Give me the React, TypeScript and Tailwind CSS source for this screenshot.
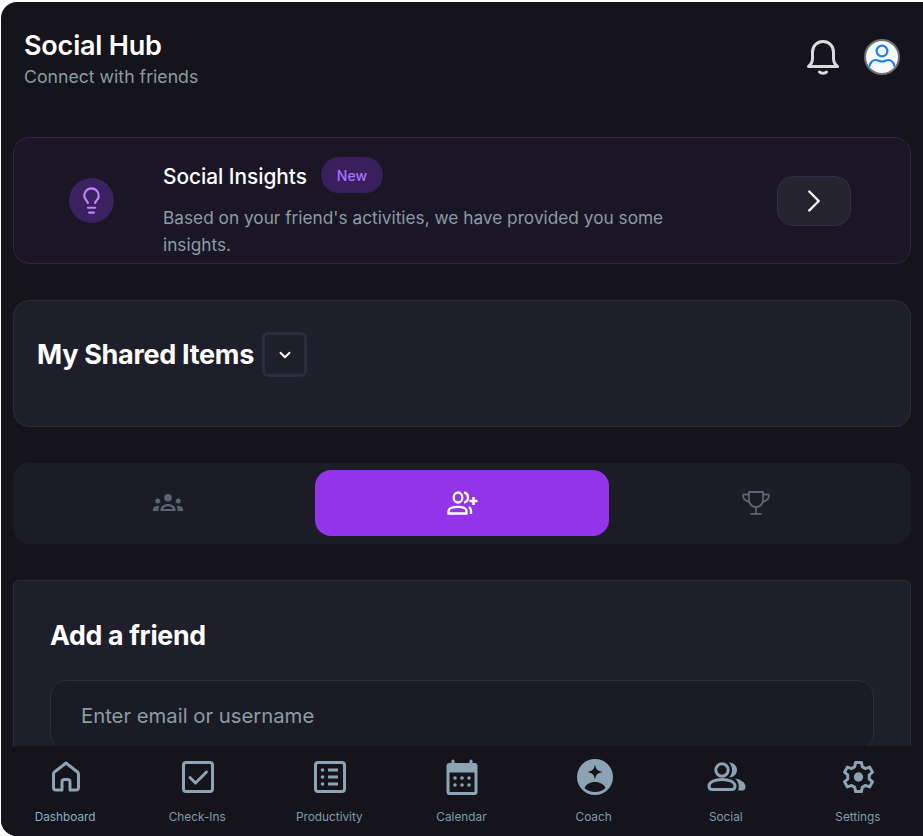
import { ChevronDown, ChevronRight, Lightbulb } from "lucide-react";

const font = { fontFamily: "Inter, 'Liberation Sans', sans-serif" };

const HomeIcon = () => (
  <svg width="28" height="31" viewBox="0 0 28 31" fill="none" stroke="currentColor" strokeWidth="3" strokeLinejoin="round">
    <path d="M10 29H4a2.5 2.5 0 0 1-2.5-2.5V13a2.5 2.5 0 0 1 1-2L14 2l11.500 9a2.500 2.500 0 0 1 1 2v13.500A2.500 2.500 0 0 1 24 29h-6v-8a2.500 2.500 0 0 0-2.500-2.500h-3A2.500 2.500 0 0 0 10 21z" />
  </svg>
);

const CheckIcon = () => (
  <svg width="32" height="32" viewBox="0 0 32 32" fill="none" stroke="currentColor" strokeWidth="3">
    <rect x="1.500" y="1.500" width="29" height="29" rx="2.500" />
    <path d="M8 16.500l5.500 5.500L24.500 11" strokeLinecap="round" strokeLinejoin="round" />
  </svg>
);

const ListIcon = () => (
  <svg width="32" height="32" viewBox="0 0 32 32" fill="none" stroke="currentColor" strokeWidth="3">
    <rect x="1.500" y="1.500" width="29" height="29" rx="2.500" />
    <path d="M14 9h10M14 16h10M14 23h10" />
    <circle cx="8.500" cy="9" r="1.800" fill="currentColor" stroke="none" />
    <circle cx="8.500" cy="16" r="1.800" fill="currentColor" stroke="none" />
    <circle cx="8.500" cy="23" r="1.800" fill="currentColor" stroke="none" />
  </svg>
);

const CalendarIcon = () => (
  <svg width="32" height="36" viewBox="0 0 32 36" fill="currentColor">
    <path fillRule="evenodd" d="M7 0.500a1.500 1.500 0 0 1 1.500 1.500v2h15V2a1.500 1.500 0 0 1 3 0v2h2A3 3 0 0 1 31.500 7v26a3 3 0 0 1-3 3h-25a3 3 0 0 1-3-3V7a3 3 0 0 1 3-3h2V2A1.500 1.500 0 0 1 7 0.500zM3.500 13.500V33h25V13.500z" />
    <circle cx="9" cy="19" r="1.800" />
    <circle cx="16" cy="19" r="1.800" />
    <circle cx="23" cy="19" r="1.800" />
    <circle cx="9" cy="26" r="1.800" />
    <circle cx="16" cy="26" r="1.800" />
    <circle cx="23" cy="26" r="1.800" />
  </svg>
);

const CoachIcon = () => (
  <svg width="36" height="36" viewBox="0 0 36 36">
    <circle cx="18" cy="18" r="18" fill="currentColor" />
    <path d="M18 5.500c1 5 2.500 6.500 7.500 7.500-5 1-6.500 2.500-7.500 7.500-1-5-2.500-6.500-7.500-7.500 5-1 6.500-2.500 7.500-7.500z" fill="#14141a" />
    <path d="M7.500 29c1.500-3.500 5.500-6 10.500-6s9 2.500 10.500 6c-2.800 2.800-6.500 4-10.500 4S10.300 31.800 7.500 29z" fill="#14141a" />
  </svg>
);

const SocialIcon = () => (
  <svg width="39" height="29" viewBox="0 0 39 29" fill="none">
    <circle cx="15" cy="8" r="6.200" stroke="currentColor" strokeWidth="3" />
    <path d="M2 24c0-4 5.500-6.500 13-6.500S28 20 28 24c0 2-1 3.500-3 3.500H5c-2 0-3-1.500-3-3.500z" stroke="currentColor" strokeWidth="3" />
    <path d="M22 0.500c4.500 0 8 3.300 8 7.500s-3.500 7.500-8 7.500c2-2 3-4.500 3-7.500s-1-5.500-3-7.500z" fill="currentColor" />
    <path d="M28 16.500c6 1 10.500 4 10.500 8 0 2.500-1 4-3 4H31c.6-1.200.8-2.500.8-4 0-3-1.300-6-3.800-8z" fill="currentColor" />
  </svg>
);

const GearIcon = () => (
  <svg width="35" height="36" viewBox="0 0 24 24" fill="none" stroke="currentColor" strokeWidth="2.050" strokeLinejoin="round">
    <path d="M10 2h4l.6 3a7.500 7.500 0 0 1 2.100 1.200l2.900-1 2 3.500-2.300 2a7.500 7.500 0 0 1 0 2.600l2.300 2-2 3.500-2.900-1a7.500 7.500 0 0 1-2.100 1.200L14 22h-4l-.6-3a7.500 7.500 0 0 1-2.100-1.200l-2.900 1-2-3.500 2.300-2a7.500 7.500 0 0 1 0-2.600l-2.300-2 2-3.500 2.900 1A7.500 7.500 0 0 1 9.400 5z" />
    <circle cx="12" cy="12" r="3.200" fill="currentColor" stroke="none" />
  </svg>
);

const BellIcon = () => (
  <svg width="32" height="35" viewBox="0 0 32 35" fill="none" stroke="#d8dade" strokeWidth="3" strokeLinecap="round" strokeLinejoin="round">
    <path d="M1.500 26.500c2.500-2 4-4 4-8V12c0-6 4.500-10.500 10.500-10.500S26.500 6 26.500 12v6.500c0 4 1.500 6 4 8z" />
    <path d="M12.500 32c1.200 1.500 5.800 1.500 7 0" />
  </svg>
);

const GroupsIcon = () => (
  <svg width="30" height="18" viewBox="0 0 30 18" fill="#5b6472">
    <circle cx="15" cy="3.800" r="3.800" />
    <circle cx="4.700" cy="7" r="2.500" />
    <circle cx="25.300" cy="7" r="2.500" />
    <path d="M0 17v-1.500c0-2 1.800-3.500 4.600-3.500.6 0 1.200.1 1.700.2-.6.900-.9 2-.9 3.200V17zM30 17v-1.500c0-2-1.800-3.500-4.600-3.500-.6 0-1.200.1-1.700.2.600.9.900 2 .9 3.200V17z" />
    <path fillRule="evenodd" d="M7.500 17v-1.500c0-3 3.200-5.500 7.500-5.500s7.500 2.500 7.500 5.500V17zM10 15h10c-.4-1.500-2.500-2.800-5-2.800s-4.600 1.300-5 2.800z" />
  </svg>
);

const PersonAddIcon = () => (
  <svg width="31" height="24" viewBox="0 0 31 24" fill="none" stroke="#fff" strokeWidth="2.300">
    <ellipse cx="11" cy="6.500" rx="4.300" ry="5" />
    <path d="M1.500 22.500v-2c0-3 4-4.700 9.500-4.700s8.500 1.700 8.500 4.700v2z" />
    <path d="M17 1.500c2.500.5 4 2.500 4 5s-1.500 4.500-4 5M22 16c1.300 1 2 2.500 2 4.300v2.700" />
    <path d="M26.500 6v8M22.500 10h8" strokeWidth="2.600" />
  </svg>
);

const TrophyIcon = () => (
  <svg width="28" height="24" viewBox="0 0 28 24" fill="none" stroke="#5b6472" strokeWidth="1.800" strokeLinejoin="round">
    <path d="M7 1h14v8c0 4-3 7-7 7s-7-3-7-7z" />
    <path d="M7 3.500H2c-.6 0-1 .4-1 1 0 3 2 5.500 6.500 6.500M21 3.500h5c.6 0 1 .4 1 1 0 3-2 5.500-6.500 6.500" />
    <path d="M14 16v6M8.500 22.800h11" />
  </svg>
);

const AvatarIcon = () => (
  <div className="flex h-9 w-9 items-center justify-center overflow-hidden rounded-full border-2 border-[#6f7275] bg-[#f6f8fa]">
    <svg width="32" height="32" viewBox="0 0 32 32" fill="none" stroke="#1a7fe8" strokeWidth="2.200">
      <circle cx="16" cy="10" r="5.400" />
      <path d="M3.500 25c1-4 3.500-6 6.500-6 2 0 3.500 1.500 6 1.500s4-1.500 6-1.500c3 0 5.500 2 6.500 6" strokeLinecap="round" />
    </svg>
  </div>
);

const navItems = [
  { label: "Dashboard", icon: <HomeIcon />, active: true },
  { label: "Check-Ins", icon: <CheckIcon /> },
  { label: "Productivity", icon: <ListIcon /> },
  { label: "Calendar", icon: <CalendarIcon /> },
  { label: "Coach", icon: <CoachIcon /> },
  { label: "Social", icon: <SocialIcon /> },
  { label: "Settings", icon: <GearIcon /> },
];

export default function App() {
  return (
    <div className="h-[836px] w-[923px] overflow-hidden bg-white pl-px pt-[2px]" style={font}>
      <div className="flex h-[834px] flex-col overflow-hidden rounded-l-2xl rounded-tr-none bg-[#14141a]">
        <main className="min-h-0 flex-1 overflow-hidden px-3">
          {/* Header */}
          <header className="flex h-[135px] items-start justify-between pl-[11px] pr-[11px] pt-[26px]">
            <div>
              <h1 className="text-[27px] leading-[36px] font-semibold tracking-[-0.2px] text-white">Social Hub</h1>
              <p className="mt-px text-[17.700px] leading-[24px] text-[#8c9ca4]">Connect with friends</p>
            </div>
            <div className="flex items-center gap-[25px] pt-[11px]">
              <BellIcon />
              <AvatarIcon />
            </div>
          </header>

          {/* Insights */}
          <section className="flex h-[127px] items-center rounded-2xl border border-[#30244a] bg-[#1b1625] pl-[55px] pr-[59px]">
            <div className="flex h-[45px] w-[45px] shrink-0 items-center justify-center rounded-full bg-[#3b2160]">
              <Lightbulb className="h-[29px] w-[29px] text-[#c084fc]" strokeWidth={1.800} />
            </div>
            <div className="ml-[49px] flex-1 pt-[14px]">
              <div className="flex h-9 items-center gap-[14px]">
                <h2 className="mt-[3px] text-[20.800px] leading-[36px] font-medium text-white">Social Insights</h2>
                <span className="flex h-9 w-[62px] items-center justify-center rounded-full bg-[#391f5e] text-[14px] font-medium text-[#ab70ff]">New</span>
              </div>
              <p className="mt-[11px] w-[540px] text-[17.250px] leading-[27px] text-[#8c9ca4]">
                Based on your friend's activities, we have provided you some insights.
              </p>
            </div>
            <button className="flex h-[50px] w-[74px] shrink-0 items-center justify-center rounded-2xl border border-[#35294d] bg-[#25232f] text-white">
              <ChevronRight className="h-[38px] w-[38px]" strokeWidth={1.500} />
            </button>
          </section>

          {/* Shared */}
          <section className="mt-[36px] h-[127px] rounded-2xl border border-[#2c2d3b] bg-[#1f1f2b] px-[23px] pt-[31px]">
            <div className="flex h-[45px] items-center gap-2">
              <h2 className="mt-[1px] text-[27px] leading-[44px] font-bold tracking-[-0.3px] text-white">My Shared Items</h2>
              <button className="flex h-[45px] w-[45px] items-center justify-center rounded-md border-[3px] border-[#2a2e3b] text-white">
                <ChevronDown className="h-[18px] w-[18px]" strokeWidth={2.500} />
              </button>
            </div>
          </section>

          {/* Tabs */}
          <nav className="mt-[36px] grid h-[81px] grid-cols-3 rounded-2xl bg-[#1b1c26] px-2 pb-2 pt-[7px]">
            <button className="flex items-center justify-center"><GroupsIcon /></button>
            <button className="flex items-center justify-center rounded-2xl bg-[#9333ea]"><PersonAddIcon /></button>
            <button className="flex items-center justify-center"><TrophyIcon /></button>
          </nav>

          {/* Add friend */}
          <section className="mt-[36px] h-[300px] rounded-t-md border border-[#2c2d3b] bg-[#1f1f2b] px-[36px] pt-[33px]">
            <h2 className="text-[26.700px] leading-[42px] font-bold tracking-[-0.3px] text-white">Add a friend</h2>
            <div className="mt-[24px] flex h-[70px] items-center rounded-2xl border border-[#2c2d3b] bg-[#1b1b26] px-[30px] pt-[3px] text-[20.300px] text-[#8c9ca4]">
              Enter email or username
            </div>
          </section>
        </main>

        {/* Bottom nav */}
        <footer className="ml-[-2px] grid h-[90px] w-[925px] shrink-0 grid-cols-7 bg-[#14141a]">
          {navItems.map((item) => (
            <div key={item.label} className="relative flex flex-col items-center text-[#8ba3b2]">
              <div className="flex h-[58px] items-center justify-center pl-[2px] pt-[3px]">{item.icon}</div>
              <span className={"mt-[5px] text-[11.800px] leading-[16px] " + (item.active ? "text-[#86b0cc]" : "text-[#7d9db2]")}>{item.label}</span>
            </div>
          ))}
        </footer>
      </div>
    </div>
  );
}
